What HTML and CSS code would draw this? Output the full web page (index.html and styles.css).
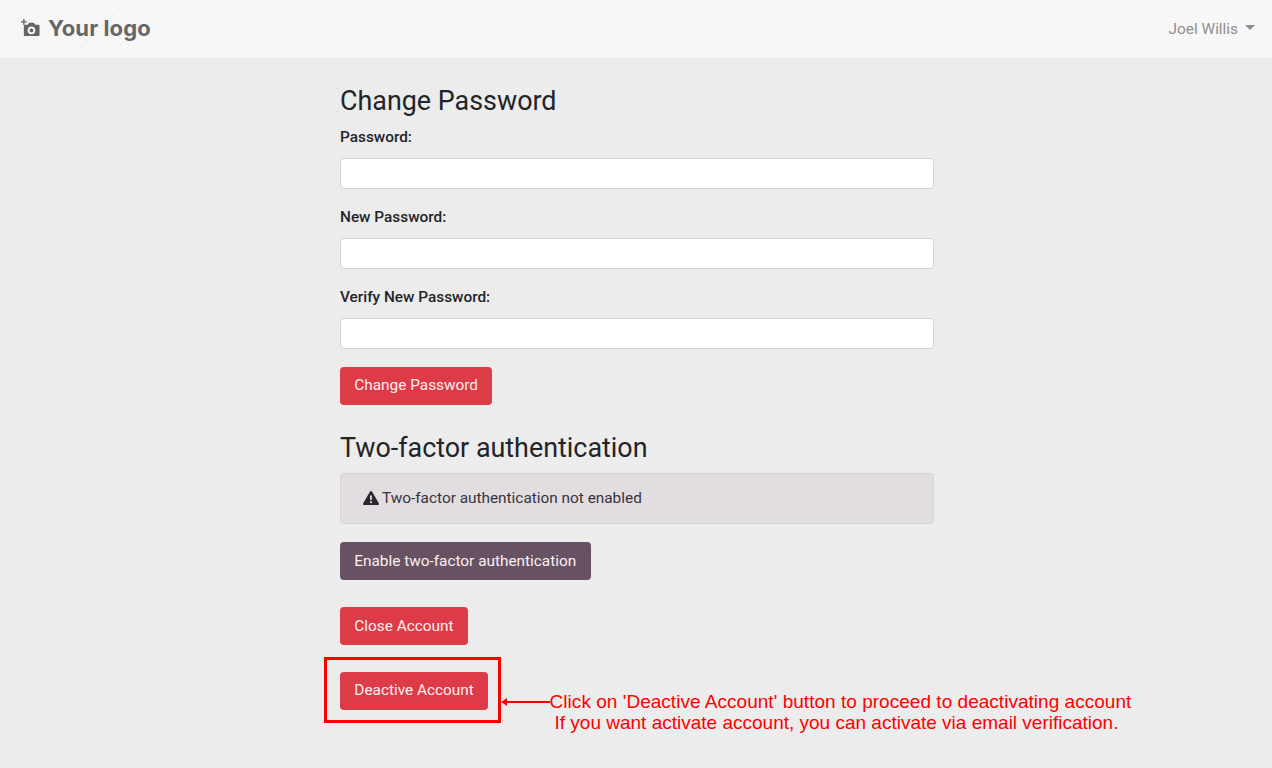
FILE: index.html
```html
<!DOCTYPE html>
<html lang="en">
<head>
    <meta charset="UTF-8">
    <title>Account Settings</title>
    <link rel="stylesheet" href="styles.css">
</head>
<body>
    <nav class="navbar">
        <a class="logo" href="#">
            <svg class="logo-icon" width="21" height="19" viewBox="0 0 22 20">
                <path d="M1 3h6M4 0v6" stroke="#666" stroke-width="1.5" fill="none"/>
                <path fill-rule="evenodd" fill="#666" d="M5 6h3l1.500-2h5L16 6h3.500a1 1 0 0 1 1 1v10a1 1 0 0 1-1 1H5a1 1 0 0 1-1-1V7a1 1 0 0 1 1-1zM12 8a4 4 0 1 0 0 8 4 4 0 0 0 0-8zm0 2a2 2 0 1 1 0 4 2 2 0 0 1 0-4z"/>
            </svg>
            <span>Your logo</span>
        </a>
        <a class="user-menu" href="#">Joel Willis<span class="caret"></span></a>
    </nav>

    <main class="container">
        <h3>Change Password</h3>
        <form>
            <div class="form-group">
                <label for="password">Password:</label>
                <input type="password" id="password">
            </div>
            <div class="form-group">
                <label for="newPassword">New Password:</label>
                <input type="password" id="newPassword">
            </div>
            <div class="form-group">
                <label for="verifyPassword">Verify New Password:</label>
                <input type="password" id="verifyPassword">
            </div>
            <button type="button" class="btn btn-danger btn-submit">Change Password</button>
        </form>

        <h3 class="two-factor-title">Two-factor authentication</h3>
        <div class="alert">
            <svg class="alert-icon" width="16" height="14" viewBox="0 0 16 14">
                <path fill-rule="evenodd" fill="#2b2730" d="M8 0c.5 0 .9.3 1.100.7l6.700 11.600c.5.800-.1 1.700-1 1.700H1.200c-.9 0-1.500-.9-1-1.700L6.900.7C7.100.3 7.500 0 8 0zM7 4.500l.2 4.500h1.600L9 4.500H7zM8 10a1.100 1.100 0 1 0 0 2.200A1.100 1.100 0 0 0 8 10z"/>
            </svg>
            Two-factor authentication not enabled
        </div>
        <div class="enable-row">
            <button type="button" class="btn btn-plum">Enable two-factor authentication</button>
        </div>
        <div class="close-row">
            <button type="button" class="btn btn-danger">Close Account</button>
        </div>
        <div class="deactivate-row">
            <button type="button" class="btn btn-danger btn-deactivate">Deactive Account</button>
            <div class="callout-box"></div>
            <div class="callout-arrow"></div>
            <p class="callout-text"><span class="callout-first">Click on 'Deactive Account' button to proceed to deactivating account</span><br>If you want activate account, you can activate via email verification.</p>
        </div>
    </main>
</body>
</html>
```

FILE: styles.css
```css
* {
    box-sizing: border-box;
}
body {
    font-family: 'Roboto', sans-serif;
    margin: 0;
    min-height: 768px;
    color: #212529;
    background-color: #ececec;
    font-size: 15.36px;
}
.navbar {
    height: 58px;
    padding: 0 17px 0 10px;
    display: flex;
    align-items: center;
    justify-content: space-between;
    background-color: #f7f7f7;
}
.logo {
    display: flex;
    align-items: center;
    gap: 7px;
    text-decoration: none;
    color: #666;
    font-family: 'Inter', sans-serif;
    font-size: 22px;
    font-weight: 700;
    line-height: 26px;
    letter-spacing: 0.1px;
    background: repeating-linear-gradient(135deg, #f7f7f7, #f7f7f7 12px, #f2f2f2 12px, #f2f2f2 13px);
    padding: 6px 12px 8px 10px;
}
.user-menu {
    color: #8f8f8f;
    text-decoration: none;
    display: flex;
    align-items: center;
}
.caret {
    margin: -3px 0 0 7px;
    border-top: 5px solid #8f8f8f;
    border-left: 5px solid transparent;
    border-right: 5px solid transparent;
}
.container {
    width: 594px;
    margin-left: 340px;
    padding-top: 26px;
}
h3 {
    font-size: 26.88px;
    font-weight: 400;
    line-height: 34px;
    margin: 0;
}
form {
    margin-top: 7px;
}
.form-group {
    margin-bottom: 16px;
}
label {
    display: block;
    font-weight: 500;
    font-size: 15.36px;
    line-height: 24px;
    margin-bottom: 9px;
}
input {
    display: block;
    width: 100%;
    height: 31px;
    background: #fff;
    border: 1px solid #ced4da;
    border-radius: 4px;
}
.btn {
    display: block;
    height: 38px;
    padding: 0 13.3px;
    border: 1px solid transparent;
    border-radius: 4px;
    color: #fdeef0;
    font-family: 'Roboto', sans-serif;
    font-size: 15.36px;
    cursor: pointer;
}
.btn-submit {
    margin-top: 18px;
    padding-bottom: 2px;
}
.btn-deactivate {
    padding-bottom: 2px;
}
.btn-danger {
    background-color: #de3b49;
}
.btn-plum {
    background-color: #675263;
}
.two-factor-title {
    margin-top: 26px;
}
.alert {
    margin-top: 8px;
    height: 51px;
    padding: 0 22px 2px;
    display: flex;
    align-items: center;
    gap: 3px;
    background-color: #e1dde1;
    border: 1px solid #d7d3d7;
    border-radius: 4px;
    color: #38333a;
}
.enable-row {
    margin-top: 18px;
}
.close-row {
    margin-top: 27px;
}
.deactivate-row {
    margin-top: 27px;
    position: relative;
}
.callout-box {
    position: absolute;
    left: -16px;
    top: -15px;
    width: 177px;
    height: 66px;
    border: 3px solid #f00;
}
.callout-arrow {
    position: absolute;
    left: 165px;
    top: 29px;
    width: 45px;
    height: 2px;
    background: #f00;
}
.callout-arrow::before {
    content: "";
    position: absolute;
    left: -4px;
    top: -3px;
    border-right: 6px solid #f00;
    border-top: 4px solid transparent;
    border-bottom: 4px solid transparent;
}
.callout-text {
    position: absolute;
    left: 200px;
    top: 19px;
    margin: 0;
    width: 593px;
    font-family: 'Liberation Sans', sans-serif;
    font-size: 19px;
    line-height: 21px;
    color: #f00;
    text-align: center;
    white-space: nowrap;
}
.callout-first {
    padding-left: 8px;
    letter-spacing: 0.03px;
}
```
